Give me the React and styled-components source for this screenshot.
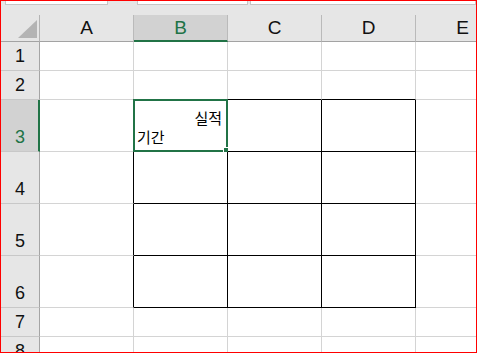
import React from 'react';
import styled, { createGlobalStyle } from 'styled-components';

const GREEN = '#217346';
const GRID = '#d4d4d4';

const Global = createGlobalStyle`
  html, body { margin: 0; padding: 0; background: #ffffff; }
  * { box-sizing: border-box; }
`;

const Frame = styled.div`
  width: 477px;
  height: 353px;
  border: 1px solid #ff0000;
  background: #e6e6e6;
  overflow: hidden;
  display: flex;
  flex-direction: column;
`;

const FormulaStrip = styled.div`
  height: 14px;
  flex: none;
  display: flex;
  align-items: flex-start;
`;

const FieldBox = styled.div`
  height: 4px;
  margin-left: ${p => p.$ml}px;
  width: ${p => p.$w}px;
  flex: ${p => (p.$grow ? '1 0 auto' : 'none')};
  background: #ffffff;
  border: 1px solid #c6c6c6;
  border-top: none;
`;

const Sheet = styled.div`
  display: grid;
  grid-template-columns: 39px repeat(5, 94px);
  grid-template-rows: ${p => p.$rows};
  font-family: "Liberation Sans", Arial, sans-serif;
`;

const Corner = styled.div`
  background: #e6e6e6;
  border-right: 1px solid #b4b4b4;
  border-bottom: 1px solid #a3a3a3;
  display: flex;
  align-items: flex-end;
  justify-content: flex-end;
  padding: 0 2px 3px 0;
`;

const ColHeader = styled.div`
  background: ${p => (p.$sel ? '#d2d2d2' : '#e6e6e6')};
  border-right: 1px solid #bababa;
  border-bottom: ${p => (p.$sel ? `2px solid ${GREEN}` : '1px solid #a3a3a3')};
  color: ${p => (p.$sel ? GREEN : '#111111')};
  font-size: 19px;
  display: flex;
  align-items: center;
  justify-content: center;
  padding-top: ${p => (p.$sel ? '1px' : '0')};
`;

const RowHeader = styled.div`
  background: ${p => (p.$sel ? '#d2d2d2' : '#e6e6e6')};
  border-right: ${p => (p.$sel ? `2px solid ${GREEN}` : '1px solid #a5a5a5')};
  border-bottom: 1px solid #c8c8c8;
  color: ${p => (p.$sel ? GREEN : '#111111')};
  font-size: 18px;
  display: flex;
  align-items: flex-end;
  justify-content: center;
  padding-bottom: 4px;
  padding-left: ${p => (p.$sel ? '1px' : '0')};
  line-height: 20px;
`;

const Cell = styled.div`
  position: relative;
  background: #ffffff;
  border-right: 1px solid ${p => (p.$br ? '#000000' : GRID)};
  border-bottom: 1px solid ${p => (p.$bb ? '#000000' : GRID)};
  display: flex;
  flex-direction: column;
  justify-content: flex-end;
  padding: 0 5px 5px 3px;
  font-family: "Noto Sans CJK KR", "Noto Sans", sans-serif;
  font-size: 15px;
  line-height: 19px;
  color: #000000;
`;

const Line = styled.div`
  text-align: ${p => p.$align};
  white-space: nowrap;
`;

const Selection = styled.div`
  position: absolute;
  top: -1px;
  left: -1px;
  right: -1px;
  bottom: -1px;
  border: 2px solid ${GREEN};
  pointer-events: none;
`;

const FillHandle = styled.div`
  position: absolute;
  right: -3px;
  bottom: -3px;
  width: 6px;
  height: 6px;
  background: ${GREEN};
  border-left: 1px solid #ffffff;
  border-top: 1px solid #ffffff;
  box-sizing: content-box;
  width: 5px;
  height: 5px;
`;

const cols = ['A', 'B', 'C', 'D', 'E'];
const rows = [
  { n: 1, h: 29 },
  { n: 2, h: 29 },
  { n: 3, h: 52 },
  { n: 4, h: 52 },
  { n: 5, h: 52 },
  { n: 6, h: 52 },
  { n: 7, h: 29 },
  { n: 8, h: 29 },
];

const inTableCol = ci => ci >= 1 && ci <= 3;

export default function App() {
  const template = `27px ${rows.map(r => `${r.h}px`).join(' ')}`;
  return (
    <>
      <Global />
      <Frame>
        <FormulaStrip>
          <FieldBox $ml={4} $w={103} />
          <FieldBox $ml={29} $w={111} />
          <FieldBox $ml={2} $grow />
        </FormulaStrip>
        <Sheet $rows={template}>
          <Corner>
            <svg width="19" height="18" viewBox="0 0 19 18">
              <polygon points="19,0 19,18 0,18" fill="#b4b4b4" />
            </svg>
          </Corner>
          {cols.map((c, ci) => (
            <ColHeader key={c} $sel={ci === 1}>{c}</ColHeader>
          ))}
          {rows.map(r => (
            <React.Fragment key={r.n}>
              <RowHeader $sel={r.n === 3}>{r.n}</RowHeader>
              {cols.map((c, ci) => {
                const br = r.n >= 3 && r.n <= 6 && ci <= 3;
                const bb = r.n >= 2 && r.n <= 6 && inTableCol(ci);
                const isB3 = r.n === 3 && ci === 1;
                return (
                  <Cell key={c} $br={br} $bb={bb}>
                    {isB3 && (
                      <>
                        <Line $align="right">실적</Line>
                        <Line $align="left">기간</Line>
                        <Selection>
                          <FillHandle />
                        </Selection>
                      </>
                    )}
                  </Cell>
                );
              })}
            </React.Fragment>
          ))}
        </Sheet>
      </Frame>
    </>
  );
}
